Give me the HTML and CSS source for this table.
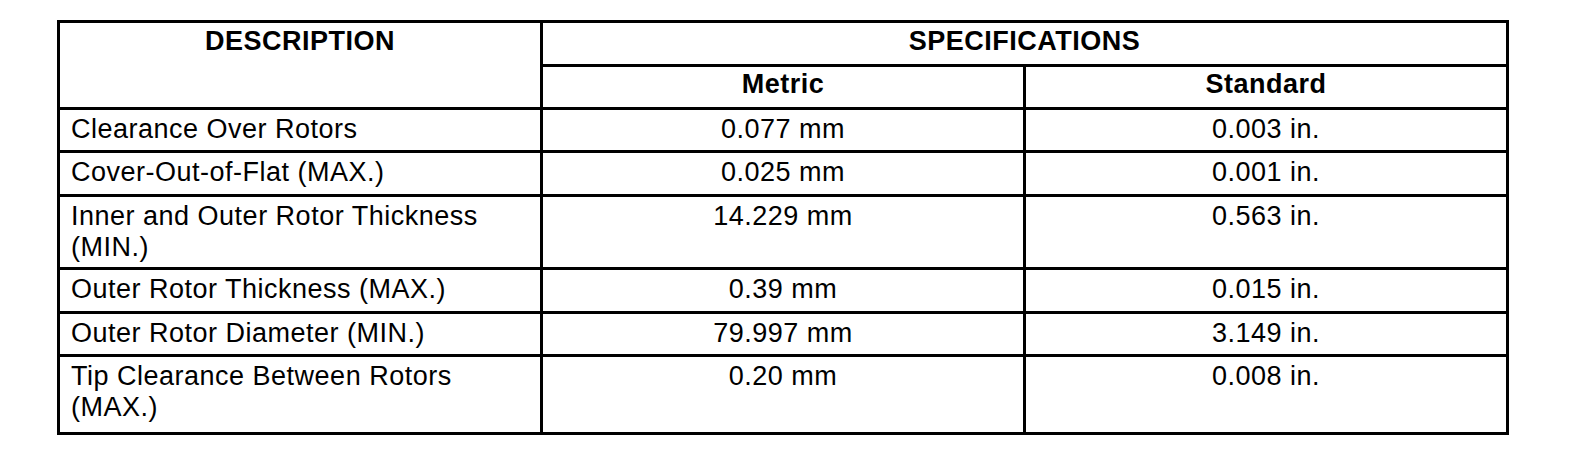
FILE: index.html
```html
<!DOCTYPE html>
<html lang="en">
<head>
    <meta charset="UTF-8">
    <meta name="viewport" content="width=device-width, initial-scale=1.0">
    <link rel="stylesheet" href="styles.css">
    <title>Oil Pump Specifications</title>
</head>
<body>

    <div class="spec_table">
        <div class="cell head desc">DESCRIPTION</div>
        <div class="cell head spec">SPECIFICATIONS</div>
        <div class="cell head">Metric</div>
        <div class="cell head">Standard</div>

        <div class="cell name">Clearance Over Rotors</div>
        <div class="cell">0.077 mm</div>
        <div class="cell">0.003 in.</div>

        <div class="cell name">Cover-Out-of-Flat (MAX.)</div>
        <div class="cell">0.025 mm</div>
        <div class="cell">0.001 in.</div>

        <div class="cell name">Inner and Outer Rotor Thickness<br>(MIN.)</div>
        <div class="cell">14.229 mm</div>
        <div class="cell">0.563 in.</div>

        <div class="cell name">Outer Rotor Thickness (MAX.)</div>
        <div class="cell">0.39 mm</div>
        <div class="cell">0.015 in.</div>

        <div class="cell name">Outer Rotor Diameter (MIN.)</div>
        <div class="cell">79.997 mm</div>
        <div class="cell">3.149 in.</div>

        <div class="cell name">Tip Clearance Between Rotors<br>(MAX.)</div>
        <div class="cell">0.20 mm</div>
        <div class="cell">0.008 in.</div>
    </div>

</body>
</html>
```

FILE: styles.css
```css
*{
    margin:0;
    padding:0;
    box-sizing: border-box;
}

body{
    background-color: white;
    font-family: "Liberation Sans", Arial, sans-serif;
    color: black;
}

.spec_table
{
    margin: 20px 0 0 57px;
    width: 1452px;
    display: grid;
    grid-template-columns: 1fr 1fr 1fr;
    grid-template-rows: 41px 40px 40px 41px 70px 41px 40px 75px;
    gap: 3px;
    padding: 3px;
    background-color: black;
}

.cell
{
    background-color: white;
    font-size: 27px;
    letter-spacing: 0.5px;
    line-height: 31px;
    padding: 4px 9px 3px;
    text-align: center;
}

.head{
    font-weight: bold;
    padding-top: 2px;
}

.desc{
    grid-row: span 2;
    padding-top: 3px;
}

.spec{
    grid-column: span 2;
    padding-top: 3px;
}

.name{
    text-align: left;
    padding-left: 11px;
}
```
